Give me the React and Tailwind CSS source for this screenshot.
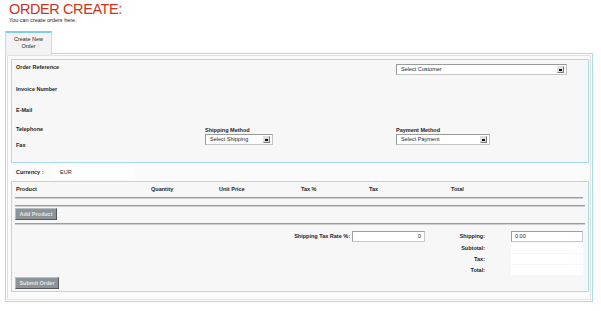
import React from "react";

const Select = ({ label, className }) => (
  <div
    className={
      "flex h-[11px] items-center justify-between border border-[#c4c4c4] border-t-[#9a9a9a] border-l-[#9a9a9a] bg-white pl-[4px] pr-[2px] " +
      className
    }
  >
    <span className="text-[5.5px] leading-[7px]">{label}</span>
    <span className="flex h-[7px] w-[7px] items-center justify-center border border-[#7a7a7a] border-t-[#e0e0e0] border-l-[#e0e0e0] bg-[#dcdcdc]">
      <span className="h-[2px] w-[3px] bg-[#111]" />
    </span>
  </div>
);

const Field = ({ value, className }) => (
  <div
    className={
      "flex h-[11px] items-center border border-[#c8c8c8] border-t-[#a0a0a0] border-l-[#a0a0a0] bg-white px-[3px] text-[5.5px] leading-[7px] " +
      className
    }
  >
    {value}
  </div>
);

const GrayButton = ({ children, className }) => (
  <button
    className={
      "flex h-[12px] items-center justify-center border border-[#b8bdc0] border-r-[#50565a] border-b-[#50565a] bg-[#8d9499] text-[5.5px] font-bold leading-[7px] text-[#e4e6e8] " +
      className
    }
  >
    {children}
  </button>
);

const Rule = ({ className }) => (
  <div className={"h-[2px] border-t border-[#9c9c9c] bg-[#cfcfcf] " + className} />
);

export default function App() {
  return (
    <div className="h-[311px] w-[601px] bg-white font-['Liberation_Sans',Arial,sans-serif] text-[#1e1e1e]">
      {/* Header */}
      <div className="pl-[9px] pt-[2px]">
        <h1 className="text-[14.5px] leading-[15px] tracking-[-0.4px] text-[#d2321d]">
          ORDER CREATE:
        </h1>
        <p className="text-[5.5px] leading-[6px]">You can create orders here.</p>
      </div>

      <div className="ml-[5px] mt-[8px] w-[588px]">
        {/* Tab */}
        <div className="relative z-10 -mb-[2px] flex h-[24px] w-[47px] flex-col items-center border-x border-t-2 border-[#d6d6d6] border-t-[#7fcfe0] bg-[#f3f3f3] pt-[3px] text-[5.5px] leading-[7px]">
          <span>Create New</span>
          <span>Order</span>
        </div>

        {/* Outer container */}
        <div className="border border-[#a9dde9] p-px">
          <div className="border border-[#e2e2e2] bg-[#fbfbfb] pb-[7px] pl-[3px] pr-px pt-[3px]">
            {/* Customer details */}
            <div className="flex h-[104px] border border-[#a9dde9] bg-[#f7f7f7] pl-[4px] text-[5.5px] font-bold leading-[7px]">
              <div className="flex w-[189px] flex-col pt-[4px]">
                <div className="h-[22px]">Order Reference</div>
                <div className="h-[21px]">Invoice Number</div>
                <div className="h-[19px]">E-Mail</div>
                <div className="h-[16px]">Telephone</div>
                <div>Fax</div>
              </div>
              <div className="flex w-[191px] flex-col pt-[67px]">
                <div className="h-[7px]">Shipping Method</div>
                <Select label="Select Shipping" className="w-[68px] font-normal" />
              </div>
              <div className="flex flex-col pt-[4px]">
                <Select label="Select Customer" className="w-[171px] font-normal" />
                <div className="mt-[52px] h-[7px]">Payment Method</div>
                <Select label="Select Payment" className="w-[94px] font-normal" />
              </div>
            </div>

            {/* Currency */}
            <div className="flex h-[18px] items-center pl-[5px] text-[5.5px] leading-[7px]">
              <span className="w-[36px] font-bold">Currency :</span>
              <span className="flex h-[10px] w-[82px] items-center bg-white pl-[8px]">EUR</span>
            </div>

            {/* Products & totals */}
            <div className="h-[111px] border border-[#a9dde9] bg-[#f7f7f7] px-[3px] pt-[4px] text-[5.5px] leading-[7px]">
              <div className="grid grid-cols-[135px_68px_82px_68px_82px_1fr] pl-px font-bold">
                <span>Product</span>
                <span>Quantity</span>
                <span>Unit Price</span>
                <span>Tax %</span>
                <span>Tax</span>
                <span>Total</span>
              </div>
              <Rule className="mt-[4px] w-[568px]" />
              <Rule className="mt-[6px] w-[570px]" />
              <GrayButton className="mt-[1px] w-[42px]">Add Product</GrayButton>
              <Rule className="mt-[3px] w-[570px]" />

              <div className="mt-[6px] flex flex-col gap-px font-bold">
                <div className="flex items-center">
                  <span className="w-[335px] text-right">Shipping Tax Rate %:</span>
                  <Field value="0" className="ml-[2px] w-[73px] justify-end font-normal" />
                  <span className="w-[60px] text-right">Shipping:</span>
                  <Field value="0.00" className="ml-[26px] w-[72px] font-normal" />
                </div>
                <div className="flex items-center">
                  <span className="w-[470px] text-right">Subtotal:</span>
                  <div className="ml-[26px] h-[10px] w-[72px] bg-white" />
                </div>
                <div className="flex items-center">
                  <span className="w-[470px] text-right">Tax:</span>
                  <div className="ml-[26px] h-[10px] w-[72px] bg-white" />
                </div>
                <div className="flex items-center">
                  <span className="w-[470px] text-right">Total:</span>
                  <div className="ml-[26px] h-[10px] w-[72px] bg-white" />
                </div>
              </div>

              <GrayButton className="mt-[2px] w-[44px]">Submit Order</GrayButton>
            </div>
          </div>
        </div>
      </div>
    </div>
  );
}
